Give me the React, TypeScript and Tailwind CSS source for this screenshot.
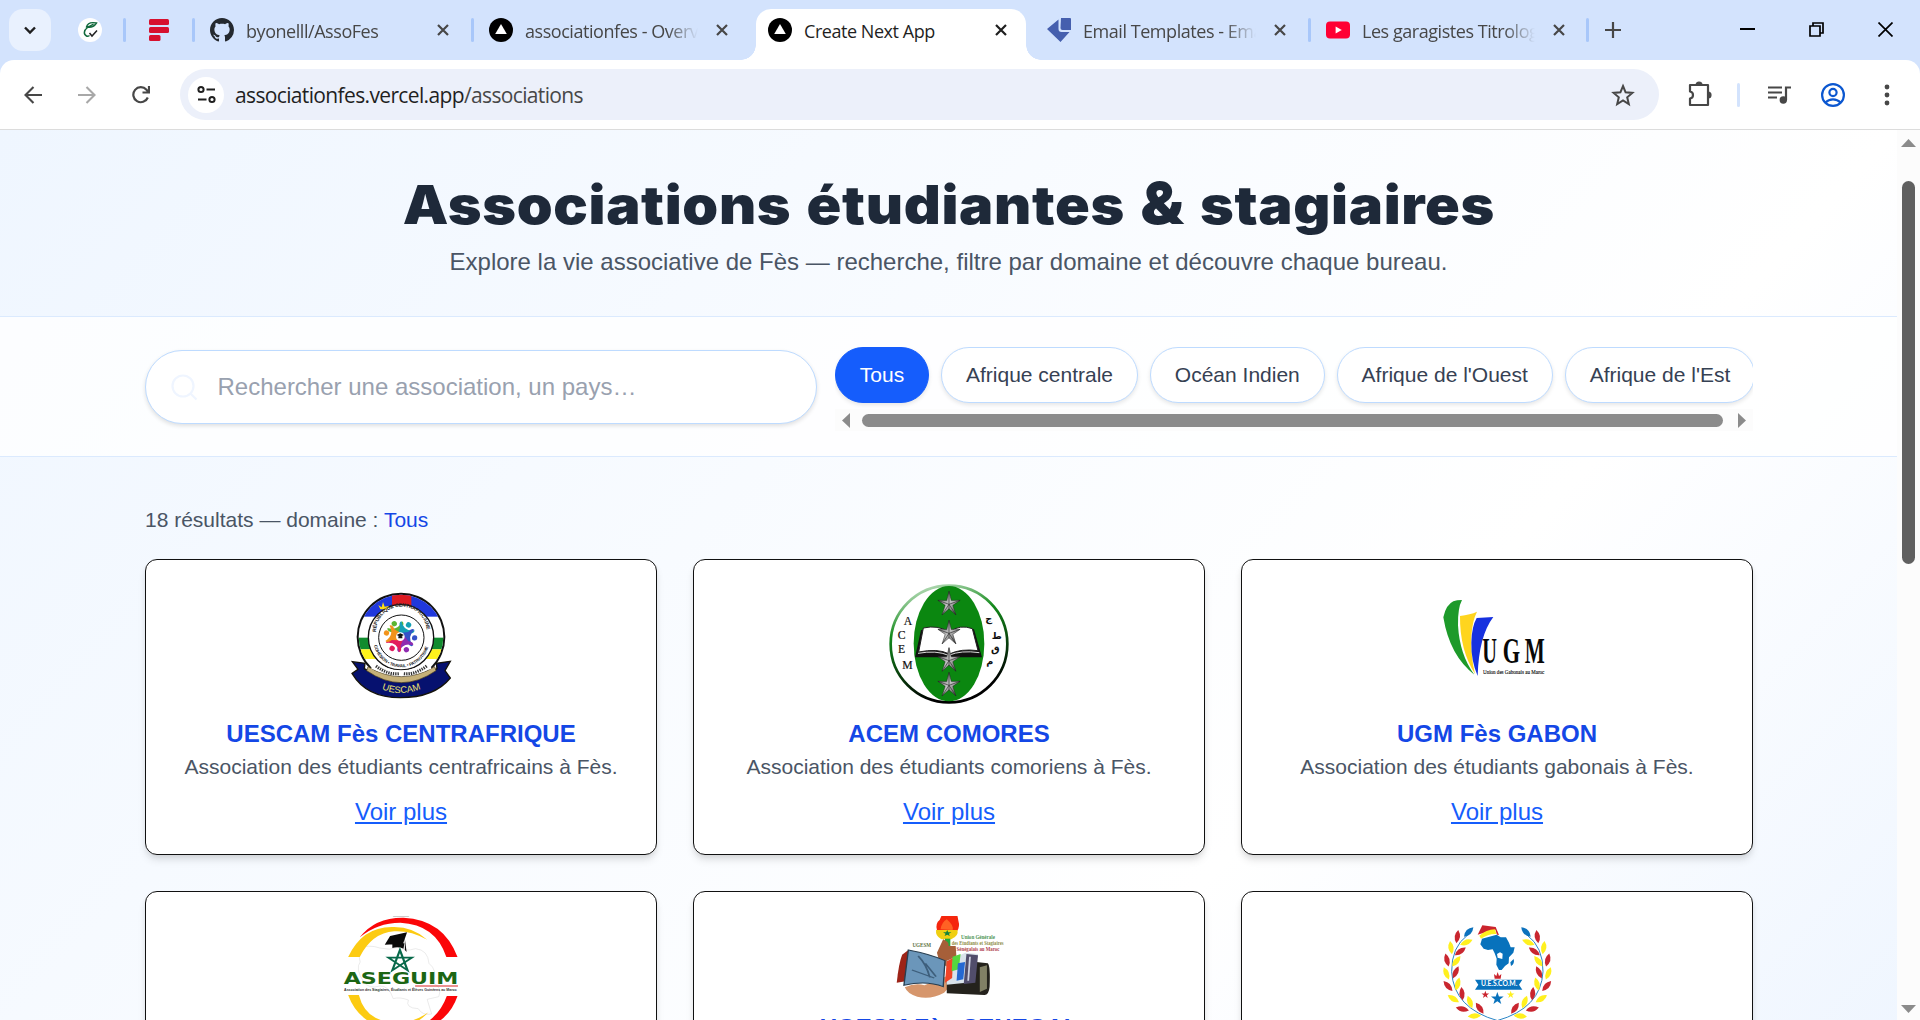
import type { ReactNode } from "react";

const STAR = "0,-10 2.4,-3.2 9.5,-3.1 3.8,1.2 5.9,8.1 0,4 -5.9,8.1 -3.8,1.2 -9.5,-3.1 -2.4,-3.2";

function CloseIcon({ dark }: { dark?: boolean }) {
  return (
    <svg className="size-3" viewBox="0 0 12 12" fill="none" stroke={dark ? "#1f1f1f" : "#474747"} strokeWidth="2.2">
      <path d="M1 1l10 10M11 1L1 11" />
    </svg>
  );
}

function VercelIcon() {
  return (
    <svg className="size-6" viewBox="0 0 24 24">
      <circle cx="12" cy="12" r="12" fill="#000" />
      <path d="M12 6l5.8 10H6.2z" fill="#fff" />
    </svg>
  );
}

function GithubIcon() {
  return (
    <svg className="size-6" viewBox="0 0 16 16" fill="#24292f">
      <path d="M8 0C3.58 0 0 3.58 0 8c0 3.54 2.29 6.53 5.47 7.59.4.07.55-.17.55-.38 0-.19-.01-.82-.01-1.49-2.01.37-2.53-.49-2.69-.94-.09-.23-.48-.94-.82-1.13-.28-.15-.68-.52-.01-.53.63-.01 1.08.58 1.23.82.72 1.21 1.87.87 2.33.66.07-.52.28-.87.51-1.07-1.78-.2-3.64-.89-3.64-3.95 0-.87.31-1.59.82-2.15-.08-.2-.36-1.02.08-2.12 0 0 .67-.21 2.2.82.64-.18 1.32-.27 2-.27s1.36.09 2 .27c1.53-1.04 2.2-.82 2.2-.82.44 1.1.16 1.92.08 2.12.51.56.82 1.27.82 2.15 0 3.07-1.87 3.75-3.65 3.95.29.25.54.73.54 1.48 0 1.07-.01 1.93-.01 2.2 0 .21.15.46.55.38A8.01 8.01 0 0016 8c0-4.42-3.58-8-8-8z" />
    </svg>
  );
}

function EmailJsIcon() {
  return (
    <svg className="size-6" viewBox="0 0 24 24" fill="#455fae">
      <path d="M14 0h9a1 1 0 011 1v11h-8.500a2 2 0 01-2-2z" />
      <path d="M11.500 1.500v9.500a3 3 0 003 3H22.500L13.500 24L0 11z" />
    </svg>
  );
}

function YoutubeIcon() {
  return (
    <svg className="size-6" viewBox="0 0 24 24">
      <rect y="3.500" width="24" height="17" rx="4" fill="#ff0033" />
      <path d="M9.600 8.500l6.200 3.500-6.200 3.500z" fill="#fff" />
    </svg>
  );
}

function Separator() {
  return <span className="h-6 w-[3px] shrink-0 rounded-full bg-[#a8c7fa]" />;
}

function Tab({ icon, title, active }: { icon: ReactNode; title: string; active?: boolean }) {
  return (
    <div className={`relative flex h-[51px] w-[270px] shrink-0 items-center pb-[9px] pl-3 ${active ? "rounded-t-[15px] bg-white" : ""}`}>
      {active && (
        <>
          <span className="absolute bottom-0 -left-[15px] size-[15px] bg-[radial-gradient(circle_at_0_0,transparent_14.500px,white_15px)]" />
          <span className="absolute -right-[15px] bottom-0 size-[15px] bg-[radial-gradient(circle_at_100%_0,transparent_14.500px,white_15px)]" />
        </>
      )}
      {icon}
      <span
        className={`mt-[2px] ml-3 w-[173px] overflow-hidden text-[18px] leading-6 tracking-[-0.45px] whitespace-nowrap ${
          active ? "text-[#1f1f1f]" : "[mask-image:linear-gradient(to_right,black_82%,transparent)] text-[#474747]"
        }`}
      >
        {title}
      </span>
      <span className="ml-[18px]">
        <CloseIcon dark={active} />
      </span>
    </div>
  );
}

function TabStrip() {
  return (
    <div className="flex h-[60px] bg-[#d3e3fd] pt-[9px]">
      <div className="ml-[9px] flex size-[42px] items-center justify-center rounded-[14px] bg-[#e9f1fe]">
        <svg className="size-3" viewBox="0 0 12 12" fill="none" stroke="#1f1f1f" strokeWidth="2.400">
          <path d="M1 3.500l5 5 5-5" />
        </svg>
      </div>
      <div className="flex h-[42px] items-center">
        <svg className="ml-[27px] size-6" viewBox="0 0 24 24" fill="none">
          <circle cx="12" cy="12" r="12" fill="#fff" />
          <path d="M18.500 5c-5-1-9 0-10 4 4 1 8-1 10-4zM9 9c3-.5 5-2 6.500-3" stroke="#11693c" strokeWidth="1.400" />
          <path d="M9.500 9.500c-4 3-4 7-1 8.500 1 .5 2 .2 3-.5" stroke="#11693c" strokeWidth="1.500" />
          <path d="M11.500 15l2.500 3 5-5.500" stroke="#222" strokeWidth="1.500" />
        </svg>
        <span className="ml-[21px] flex">
          <Separator />
        </span>
        <svg className="ml-[23px] h-6 w-5" viewBox="0 0 20 24" fill="#d7102e">
          <rect y="1" width="20" height="6" rx="1.500" />
          <rect y="9" width="20" height="6" rx="1.500" />
          <rect y="17" width="11.500" height="6" rx="1.500" />
        </svg>
        <span className="ml-[23px] flex">
          <Separator />
        </span>
      </div>
      <div className="ml-[3px] flex">
        <Tab icon={<GithubIcon />} title="byonelll/AssoFes" />
        <div className="flex h-[42px] w-[9px] items-center pl-[3px]">
          <Separator />
        </div>
        <Tab icon={<VercelIcon />} title="associationfes - Overview" />
        <div className="w-[9px]" />
        <Tab icon={<VercelIcon />} title="Create Next App" active />
        <div className="w-[9px]" />
        <Tab icon={<EmailJsIcon />} title="Email Templates - EmailJS" />
        <div className="flex h-[42px] w-[9px] items-center pl-[3px]">
          <Separator />
        </div>
        <Tab icon={<YoutubeIcon />} title="Les garagistes Titrologue" />
      </div>
      <div className="flex h-[42px] items-center pl-[2px]">
        <Separator />
        <svg className="ml-[16px] size-4" viewBox="0 0 16 16" stroke="#474747" strokeWidth="2.200">
          <path d="M8 0v16M0 8h16" />
        </svg>
      </div>
      <div className="mt-[13px] ml-auto flex h-4 gap-[54px] pr-[27px]">
        <svg className="size-[15px]" viewBox="0 0 15 15" stroke="#000" strokeWidth="2">
          <path d="M0 7h15" />
        </svg>
        <svg className="size-[15px]" viewBox="0 0 15 15" fill="none" stroke="#000" strokeWidth="1.700">
          <path d="M1 4h10v10H1zM4 4V1h10v10h-3" />
        </svg>
        <svg className="size-[15px]" viewBox="0 0 15 15" stroke="#000" strokeWidth="1.700">
          <path d="M.5.5l14 14M14.500.5l-14 14" />
        </svg>
      </div>
    </div>
  );
}

function Toolbar() {
  return (
    <div className="bg-[#d3e3fd]">
      <div className="flex h-[70px] items-center rounded-t-[14px] border-b border-[#dcdcdc] bg-white">
        <svg className="ml-6 size-[18px]" viewBox="0 0 18 18" fill="none" stroke="#474747" strokeWidth="2.100">
          <path d="M18 9H2M9.500 1L1.500 9l8 8" />
        </svg>
        <svg className="ml-9 size-[18px]" viewBox="0 0 18 18" fill="none" stroke="#a8a8a8" strokeWidth="2.100">
          <path d="M0 9h16M8.500 1l8 8-8 8" />
        </svg>
        <svg className="ml-9 size-[18px]" viewBox="0 0 18 18" fill="none" stroke="#474747" strokeWidth="2.200">
          <path d="M15.800 11.500A7.500 7.500 0 1 1 14.500 3.800L17 6.500M17 0v6.500h-6.500" />
        </svg>
        <div className="ml-[30px] flex h-[51px] w-[1479px] items-center rounded-full bg-[#ecf0fa] pl-[8px]">
          <span className="flex size-9 items-center justify-center rounded-full bg-white">
            <svg className="size-[19px]" viewBox="0 0 19 19" fill="none" stroke="#1f1f1f" strokeWidth="2">
              <circle cx="4" cy="4.500" r="2.600" />
              <path d="M9.500 4.500H18M1 14.500h8.500" />
              <circle cx="15" cy="14.500" r="2.600" />
            </svg>
          </span>
          <span className="ml-[11px] text-[21px] leading-7 tracking-[-0.64px] text-[#474747]">
            <span className="text-[#1f1f1f]">associationfes.vercel.app</span>/associations
          </span>
          <svg className="mr-6 ml-auto size-6" viewBox="0 0 24 24" fill="none" stroke="#474747" strokeWidth="2">
            <path d="M12 3l2.600 6.300 6.800.6-5.200 4.400 1.600 6.700L12 17.400 6.200 21l1.600-6.700L2.600 9.900l6.800-.6z" />
          </svg>
        </div>
        <svg className="ml-[28px] size-[26px] -translate-y-px" viewBox="0 0 26 26" fill="none" stroke="#474747" strokeWidth="2.200">
          <path d="M3 4h18v20H3v-6.500c4-.5 4-6.500 0-7z" strokeLinejoin="round" />
          <path d="M9 4a3 3 0 016 0zM21 11a3 3 0 010 6z" fill="#474747" strokeWidth="1.200" />
        </svg>
        <span className="ml-[24px] h-6 w-[3px] rounded-full bg-[#d3e3fd]" />
        <svg className="ml-[27px] size-6" viewBox="0 0 24 24" fill="none" stroke="#474747" strokeWidth="2.200">
          <path d="M1 4.500h14M1 9.500h14M1 14.500h9M24 4.500h-5V17" />
          <circle cx="16.300" cy="17" r="3.700" fill="#474747" stroke="none" />
        </svg>
        <svg className="ml-[30px] size-6" viewBox="0 0 24 24" fill="none" stroke="#0b57d0" strokeWidth="2.200">
          <circle cx="12" cy="12" r="10.900" />
          <circle cx="12" cy="9.500" r="3.600" />
          <path d="M4.500 19.500c4-4.300 11-4.300 15 0" />
        </svg>
        <svg className="ml-[39px] h-6 w-[6px]" viewBox="0 0 6 24" fill="#474747">
          <circle cx="3" cy="4" r="2.400" />
          <circle cx="3" cy="12" r="2.400" />
          <circle cx="3" cy="20" r="2.400" />
        </svg>
      </div>
    </div>
  );
}

function UescamLogo() {
  const figures = [
    { a: -25, c: "#5cb531" },
    { a: 35, c: "#15a0b4" },
    { a: 95, c: "#3452c8" },
    { a: 155, c: "#8f2bb0" },
    { a: 215, c: "#e21c5d" },
    { a: 285, c: "#f2931b" },
  ];
  return (
    <svg className="size-[120px]" viewBox="33 42 360 360">
      <defs>
        <clipPath id="uescam-ring">
          <circle cx="213" cy="201" r="127" />
        </clipPath>
        <path id="uescam-top" d="M138 186a76 76 0 01152 0" />
        <path id="uescam-mid" d="M132 226a84 84 0 00164 0" />
        <path id="uescam-base" d="M112 334q100 70 204 0" />
      </defs>
      <circle cx="213" cy="201" r="133" fill="#111" />
      <g clipPath="url(#uescam-ring)">
        <rect x="80" y="70" width="270" height="270" fill="#fff" />
        <rect x="80" y="70" width="270" height="70" fill="#2038dc" />
        <rect x="186" y="70" width="58" height="60" fill="#dd1b22" />
        <rect x="80" y="203" width="270" height="35" fill="#118b2e" />
        <rect x="80" y="238" width="270" height="29" fill="#fff31c" />
      </g>
      <circle cx="213" cy="202" r="98" fill="#fff" stroke="#111" strokeWidth="4" />
      <path d="M67 275l38 5-2 16q110 72 218 0l-2-16 42-6-16 28 16 22q-48 59-150 59T66 310l18-12z" fill="#06116f" stroke="#15130c" strokeWidth="4" />
      <path d="M114 290q100 60 200 0l4 12q-104 72-208 0z" fill="#c5b078" stroke="#42371d" strokeWidth="2" />
      <path d="M128 270q85 62 172 0l4 26q-90 40-180 0z" fill="#fff" />
      <circle cx="214" cy="203" r="68" fill="#fff" stroke="#111" strokeWidth="3" />
      <path d="M138 288q35 27 70 23M290 288q-35 27-70 23" fill="none" stroke="#333" strokeWidth="9" strokeDasharray="4 3" />
      <path d="M145 105l10 7 4-16 5 14 13-2-8 10-18 0z" fill="#ffdf13" />
      {figures.map((f) => (
        <g key={f.a} transform={`translate(0 2) rotate(${f.a} 211 198)`} fill={f.c}>
          <circle cx="211" cy="155" r="8" />
          <path d="M187 158q24 22 48 0 6 8-8 18l-4 18h-24l-4-18q-14-10-8-18z" />
        </g>
      ))}
      <circle cx="211" cy="200" r="13" fill="#fff" />
      <path d="M200 195l11-5 11 5-11 5zM205 199h12v6h-12z" fill="#111" />
      <g fontFamily="Liberation Sans" fontWeight="700" fill="#222">
        <text fontSize="15">
          <textPath href="#uescam-top" textLength="232">RÉPUBLIQUE CENTRAFRICAINE</textPath>
        </text>
        <text fontSize="13">
          <textPath href="#uescam-mid" textLength="222">COHÉSION • TRAVAIL • PATRIOTISME</textPath>
        </text>
        <text fontSize="28" fontWeight="400" fill="#eee36f" textAnchor="middle">
          <textPath href="#uescam-base" startOffset="50%">UESCAM</textPath>
        </text>
      </g>
    </svg>
  );
}

function AcemLogo() {
  return (
    <svg className="size-[120px]" viewBox="57 42 360 360">
      <defs>
        <linearGradient id="acem-edge" x1="0" y1="0" x2="0.300" y2="1">
          <stop offset="0" stopColor="#dff0df" />
          <stop offset="0.400" stopColor="#138a1b" />
          <stop offset="1" stopColor="#000" />
        </linearGradient>
        <linearGradient id="acem-star" x1="0" y1="0" x2="1" y2="1">
          <stop offset="0" stopColor="#444" />
          <stop offset="0.500" stopColor="#c4c4c4" />
          <stop offset="1" stopColor="#333" />
        </linearGradient>
      </defs>
      <circle cx="237" cy="222" r="175" fill="#fff" stroke="url(#acem-edge)" strokeWidth="8" />
      <ellipse cx="237" cy="221" rx="106" ry="173" fill="#0b8710" />
      <path d="M153 180l-18 82h96q6 6 12 0h93l-24-84z" fill="#111" />
      <path d="M160 174q44-10 77 12 34-24 70-10l17 66q-51-7-86 10-35-18-92-6z" fill="#fff" stroke="#222" strokeWidth="3" />
      <path d="M144 250q55-10 92 6 37-16 92-8" fill="none" stroke="#ddd" strokeWidth="3" />
      {[103, 190, 272, 346].map((y) => (
        <g key={y} transform={`translate(237 ${y}) scale(3.500 3.900)`}>
          <path d="M0-10L2-3 9.500-3.100 3.300.8 5.900 8.100 0 3.400-5.900 8.100-3.300.8-9.500-3.100-2-3z" fill="url(#acem-star)" stroke="#222" strokeWidth="0.400" />
          <path d="M0-10V4M9.500-3.100L0 0l5.900 8.100M-9.500-3.100L0 0l-5.900 8.100" stroke="#222" strokeWidth="0.500" fill="none" />
        </g>
      ))}
      <g fontFamily="Liberation Serif" fontSize="35" fill="#111" stroke="#111" strokeWidth="0.600">
        <text x="101" y="165">A</text>
        <text x="83" y="207">C</text>
        <text x="84" y="250">E</text>
        <text x="97" y="297">M</text>
      </g>
      <g fontFamily="DejaVu Sans" fontWeight="700" fontSize="29" fill="#111">
        <text x="346" y="156">ج</text>
        <text x="365" y="207">ط</text>
        <text x="363" y="246">ق</text>
        <text x="349" y="286">م</text>
      </g>
    </svg>
  );
}

function UgmLogo() {
  return (
    <svg className="size-[120px]" viewBox="51 12 360 360">
      <path d="M126 60q-13 24-12 76 5 89 49 148-74-57-93-172 8-38 30-48 10-4 26-4z" fill="#1d9a2a" />
      <path d="M120 108q31-4 51-13-14 27-17 74-2 60 11 113-46-72-45-174z" fill="#ffd51e" />
      <path d="M170 114l50-3q-44 58-47 177-20-46-19-100 1-48 16-74z" fill="#1631df" />
      <g fontFamily="Liberation Serif" fill="#080808">
        <text x="187" y="250" fontSize="108" fontWeight="700" textLength="44" lengthAdjust="spacingAndGlyphs">U</text>
        <text x="248" y="250" fontSize="108" fontWeight="700" textLength="52" lengthAdjust="spacingAndGlyphs">G</text>
        <text x="314" y="250" fontSize="108" fontWeight="700" textLength="60" lengthAdjust="spacingAndGlyphs">M</text>
        <text x="189" y="283" fontSize="19" stroke="#080808" strokeWidth="0.400" textLength="184" lengthAdjust="spacingAndGlyphs">Union des Gabonais au Maroc</text>
      </g>
    </svg>
  );
}

function AseguimLogo() {
  return (
    <svg className="size-[120px]" viewBox="47 108 268.800 360" preserveAspectRatio="none">
      <path d="M84 206q25-14 50-2 22 8 40-2 16 14 40 4 28 4 30 44 20 20 10 60 20 10 12 40l-26 8 10 44q-20 6-30-16-30-2-22-26-20-10-34-4-10-40-30-38-24 10-36-12-20-40-8-60z" fill="none" stroke="#ddd" strokeWidth="1.500" />
      <path d="M63 231q32-91 99-90 45-2 78 38-38-28-74-25-50 5-77 77z" fill="#fccb12" />
      <path d="M89 172q34-60 98-59 90 6 121 118h-25q-24-98-103-103-52 0-91 44z" fill="#fb0608" />
      <path d="M160 109q22-5 43 0z" fill="#333" />
      <path d="M63 345h24q16 85 90 82 34 0 66-30-36 50-90 50-68-20-90-102z" fill="#fccb12" />
      <path d="M308 348h-24q-20 76-84 105 84-10 108-105z" fill="#fb0608" />
      <path d="M157 168l38-11-9 34-41 3zM162 192l27-2-2 16q-12-7-25-2zM190 176l4 40-4-6z" fill="#0a0a0a" />
      <path d="M179 210l17 61-43-38h53l-44 38z" fill="none" stroke="#07694a" strokeWidth="5" />
      <text x="53" y="311" fontFamily="DejaVu Sans" fontWeight="700" fontSize="48" fill="#1c6614" textLength="257" lengthAdjust="spacingAndGlyphs">ASEGUIM</text>
      <path d="M213 318h96" stroke="#dc2525" strokeWidth="3" />
      <text x="54" y="334" fontFamily="Liberation Sans" fontSize="13" fontWeight="700" fill="#333" textLength="252" lengthAdjust="spacingAndGlyphs">Association des Stagiaires, Étudiants et Élèves Guinéens au Maroc</text>
    </svg>
  );
}

function UgesmLogo() {
  return (
    <svg className="h-[82px] w-[120px]" viewBox="1274.600 108 268.800 246" preserveAspectRatio="none">
      <path d="M1382 150q-4-20 6-30l4-12h36l2 14q4 18-3 31z" fill="#f5260d" />
      <path d="M1390 148q2-20 14-30 16 18 13 32z" fill="#ff6224" />
      <path d="M1380 150h48q3 18-14 28h-22q-14-10-12-28z" fill="#f0cf12" />
      <polygon points={STAR} transform="translate(1405 160)" fill="#12823c" />
      <path d="M1400 176h12v34h-12z" fill="#25a73c" />
      <path d="M1396 178q14 8 12 20l16 0 2 40-10 30-28-20-6-30z" fill="#a65f39" />
      <path d="M1310 322q24-14 44-6l58-32q10 24-14 54-30 22-60 12-22-8-28-28z" fill="#d6966c" />
      <path d="M1304 224l14-14v92l-26 6q4-56 12-84z" fill="#9d2418" />
      <path d="M1470 246l26 4q6 8 4 70-2 26-12 25l-84-5v-54z" fill="#24221c" />
      <path d="M1478 262l16-6v70l-16 10z" fill="#818065" />
      <path d="M1318 210q48 12 82 32l-4 78q-38-20-88-4z" fill="#6b96ba" stroke="#283e50" strokeWidth="3" />
      <path d="M1340 228q18 24 26 64M1356 250l24 40M1326 270l50 24" stroke="#3e5f7c" strokeWidth="4" fill="none" />
      <path d="M1404 242l42-24 28 4-10 84-60 8z" fill="#d9e3eb" />
      <path d="M1404 244l14-10-2 60-16 14z" fill="#f04427" />
      <path d="M1417 230l18-8-4 46-16 6z" fill="#55d63e" />
      <path d="M1429 250l16-4-4 52-15 4z" fill="#2568d2" />
      <path d="M1448 222l26 4-6 82-26 4z" fill="#514d6b" />
      <path d="M1456 230l-4 72" stroke="#ced0e0" strokeWidth="4" />
      <g fontFamily="Liberation Serif" fontWeight="700">
        <text x="1327" y="200" fontSize="18" fill="#5d7343" textLength="42" lengthAdjust="spacingAndGlyphs">UGESM</text>
        <text x="1436" y="177" fontSize="17" fill="#4e9556" textLength="76" lengthAdjust="spacingAndGlyphs">Union Générale</text>
        <text x="1415" y="195" fontSize="17" fill="#8e8b43" textLength="116" lengthAdjust="spacingAndGlyphs">des Etudiants et Stagiaires</text>
        <text x="1426" y="212" fontSize="17" fill="#b03e4b" textLength="96" lengthAdjust="spacingAndGlyphs">Sénégalais au Maroc</text>
      </g>
    </svg>
  );
}

const LEAVES: [number, number, number, string][] = [
  [146, 96, 45, "#0d72bd"],
  [112, 110, 8, "#c9262f"],
  [139, 127, 68, "#fff01f"],
  [93, 143, -8, "#fff01f"],
  [121, 154, 55, "#c9262f"],
  [81, 180, -14, "#c9262f"],
  [109, 184, 38, "#fff01f"],
  [79, 220, -22, "#fff01f"],
  [107, 217, 25, "#c9262f"],
  [84, 258, -42, "#c9262f"],
  [113, 252, 15, "#fff01f"],
  [100, 296, -58, "#fff01f"],
  [126, 281, -5, "#c9262f"],
  [127, 327, -78, "#c9262f"],
  [150, 306, -20, "#fff01f"],
  [163, 348, 85, "#fff01f"],
  [179, 325, -35, "#c9262f"],
];

function Branch() {
  return (
    <>
      <path d="M143 105q-49 36-48 110 6 110 138 147" fill="none" stroke="#2a85c6" strokeWidth="3" />
      {LEAVES.map(([x, y, r, color]) => (
        <path key={`${x}-${y}`} transform={`translate(${x} ${y}) rotate(${r})`} d="M0-20Q16 0 0 20-16 0 0-20z" fill={color} />
      ))}
    </>
  );
}

function UescomLogo() {
  return (
    <svg className="size-[120px]" viewBox="51 48 360 360">
      <Branch />
      <g transform="translate(464 0) scale(-1 1)">
        <Branch />
      </g>
      <path d="M186 116l44-12 12 8h16l9 16 5 14h12l-4 16-13 14-1 18-11 8-10 12h-8l-8-16 1-18-6-16-6-12-14 2-13-4-10-13 3-10z" fill="#0872bc" />
      <path d="M231 162l9-5 8 4-1 16-14-4z" fill="#fff" />
      <path d="M281 177q4 14-8 21l-2-11z" fill="#0872bc" />
      <path d="M173 104l14-28 40 5 10 24-6-1-5-15-44 12z" fill="#cb242d" />
      <path d="M178 107q20-18 47-19l4 14q-24-1-46 14z" fill="#fff01f" />
      <path d="M222 222l7 6 4-12 4 12 7-6-2 14h-18z" fill="#cb242d" />
      <path d="M165 239h142l-10 15 10 15H165l10-15z" fill="#0872bc" />
      <text x="183" y="259" fontFamily="Lato" fontWeight="700" fontSize="20" fill="#fff" textLength="109" lengthAdjust="spacingAndGlyphs">U.E.S.CO.M.</text>
      <polygon points={STAR} transform="translate(196 284) scale(1.200)" fill="#cb242d" />
      <polygon points={STAR} transform="translate(272 284) scale(1.200)" fill="#fff01f" />
      <polygon points={STAR} transform="translate(232 296) scale(2)" fill="#0872bc" />
    </svg>
  );
}

type Association = { name: string; description: string; logo: ReactNode };

const ASSOCIATIONS: Association[] = [
  { name: "UESCAM Fès CENTRAFRIQUE", description: "Association des étudiants centrafricains à Fès.", logo: <UescamLogo /> },
  { name: "ACEM COMORES", description: "Association des étudiants comoriens à Fès.", logo: <AcemLogo /> },
  { name: "UGM Fès GABON", description: "Association des étudiants gabonais à Fès.", logo: <UgmLogo /> },
  { name: "ASEGUIM Fès GUINEE", description: "Association des étudiants guinéens à Fès.", logo: <AseguimLogo /> },
  { name: "UGESM Fès SENEGAL", description: "Association des étudiants sénégalais à Fès.", logo: <UgesmLogo /> },
  { name: "UESCOM Fès CONGO", description: "Association des étudiants congolais à Fès.", logo: <UescomLogo /> },
];

function AssociationCard({ name, description, logo }: Association) {
  return (
    <article className="flex flex-col items-center rounded-xl border border-[#111] bg-white p-6 text-center shadow-[0_6px_9px_-1px_rgba(0,0,0,0.1),0_3px_6px_-2px_rgba(0,0,0,0.1)]">
      {logo}
      <h2 className="mt-3 text-[24px] leading-9 font-bold text-[#1447e6]">{name}</h2>
      <p className="text-[21px] leading-[30px] text-[#4a5565]">{description}</p>
      <a className="mt-3 text-[24px] leading-9 text-[#155dfc] underline">Voir plus</a>
    </article>
  );
}

const DOMAINS = ["Tous", "Afrique centrale", "Océan Indien", "Afrique de l'Ouest", "Afrique de l'Est"];

function Filters() {
  return (
    <div className="w-[918px]">
      <div className="flex gap-3 overflow-hidden pb-[6px]">
        {DOMAINS.map((domain, i) => (
          <button
            key={domain}
            className={`h-14 shrink-0 rounded-full border pr-6 pl-[23.800px] text-[21px] leading-[30px] whitespace-nowrap shadow-[0_2px_4px_rgba(0,0,0,0.1)] ${
              i === 0 ? "border-[#155dfc] bg-[#155dfc] text-white" : "border-[#bedbff] bg-white text-[#364153]"
            }`}
          >
            {domain}
          </button>
        ))}
      </div>
      <div className="flex h-[22px] items-center bg-[#fcfcfc] px-[7px]">
        <svg className="h-[15px] w-2" viewBox="0 0 8 15" fill="#8b8b8b">
          <path d="M8 0v15L0 7.500z" />
        </svg>
        <span className="mx-3 h-[13px] flex-1 rounded-full bg-[#8b8b8b]" />
        <svg className="ml-[3px] h-[15px] w-2" viewBox="0 0 8 15" fill="#8b8b8b">
          <path d="M0 0v15l8-7.500z" />
        </svg>
      </div>
    </div>
  );
}

function Page() {
  return (
    <main className="h-[2060px] w-[1897px] bg-linear-to-br from-[#eff6ff] via-white to-[#dbeafe] font-['Liberation_Sans',Arial,sans-serif]">
      <header className="flex h-[186px] flex-col items-center pt-[44px]">
        <h1 className="h-[60px] scale-x-[1.084] font-['Inter','Arial_Black',sans-serif] text-[53px] leading-[60px] font-black tracking-[0.6px] whitespace-nowrap text-[#1e2939] [word-spacing:3px]">
          Associations étudiantes <span className="text-[58px] leading-none">&amp;</span> stagiaires
        </h1>
        <p className="mt-[10px] text-[24px] leading-9 text-[#4a5565]">
          Explore la vie associative de Fès — recherche, filtre par domaine et découvre chaque bureau.
        </p>
      </header>
      <section className="h-[141px] border-y border-[#dbeafe] bg-white/80 pt-[30px] pl-[145px]">
        <div className="flex gap-[18px]">
          <div className="mt-[3px] flex h-[74px] w-[672px] items-center rounded-full border border-[#bedbff] bg-white pl-[25px] shadow-[0_2px_4px_rgba(0,0,0,0.12)]">
            <svg className="size-[27px]" viewBox="0 0 27 27" fill="none" stroke="#eff5ff" strokeWidth="2.200">
              <circle cx="12" cy="12" r="10.500" />
              <path d="M19.500 19.500l6 6" />
            </svg>
            <span className="mb-px ml-[19.500px] text-[24px] text-[#99a1af]">Rechercher une association, un pays…</span>
          </div>
          <Filters />
        </div>
      </section>
      <section className="px-[145px] pt-12">
        <p className="text-[21px] leading-[30px] text-[#4a5565]">
          18 résultats — domaine : <span className="text-[#1447e6]">Tous</span>
        </p>
        <div className="mt-6 grid w-[1608px] grid-cols-3 gap-9">
          {ASSOCIATIONS.map((association) => (
            <AssociationCard key={association.name} {...association} />
          ))}
        </div>
      </section>
    </main>
  );
}

function PageScrollbar() {
  return (
    <div className="flex h-full w-[23px] shrink-0 flex-col items-center bg-[#fcfcfc] pt-[9px] pb-[7px]">
      <svg className="h-2 w-[15px]" viewBox="0 0 15 8" fill="#8b8b8b">
        <path d="M7.500 0L15 8H0z" />
      </svg>
      <span className="mt-[34px] h-[383px] w-[13px] rounded-full bg-[#606060]" />
      <svg className="mt-auto h-2 w-[15px]" viewBox="0 0 15 8" fill="#8b8b8b">
        <path d="M7.500 8L15 0H0z" />
      </svg>
    </div>
  );
}

export default function App() {
  return (
    <div className="flex h-[1020px] w-[1920px] flex-col overflow-hidden bg-white font-['Open_Sans','Noto_Sans',sans-serif]">
      <TabStrip />
      <Toolbar />
      <div className="flex h-[890px] overflow-hidden">
        <Page />
        <PageScrollbar />
      </div>
    </div>
  );
}
